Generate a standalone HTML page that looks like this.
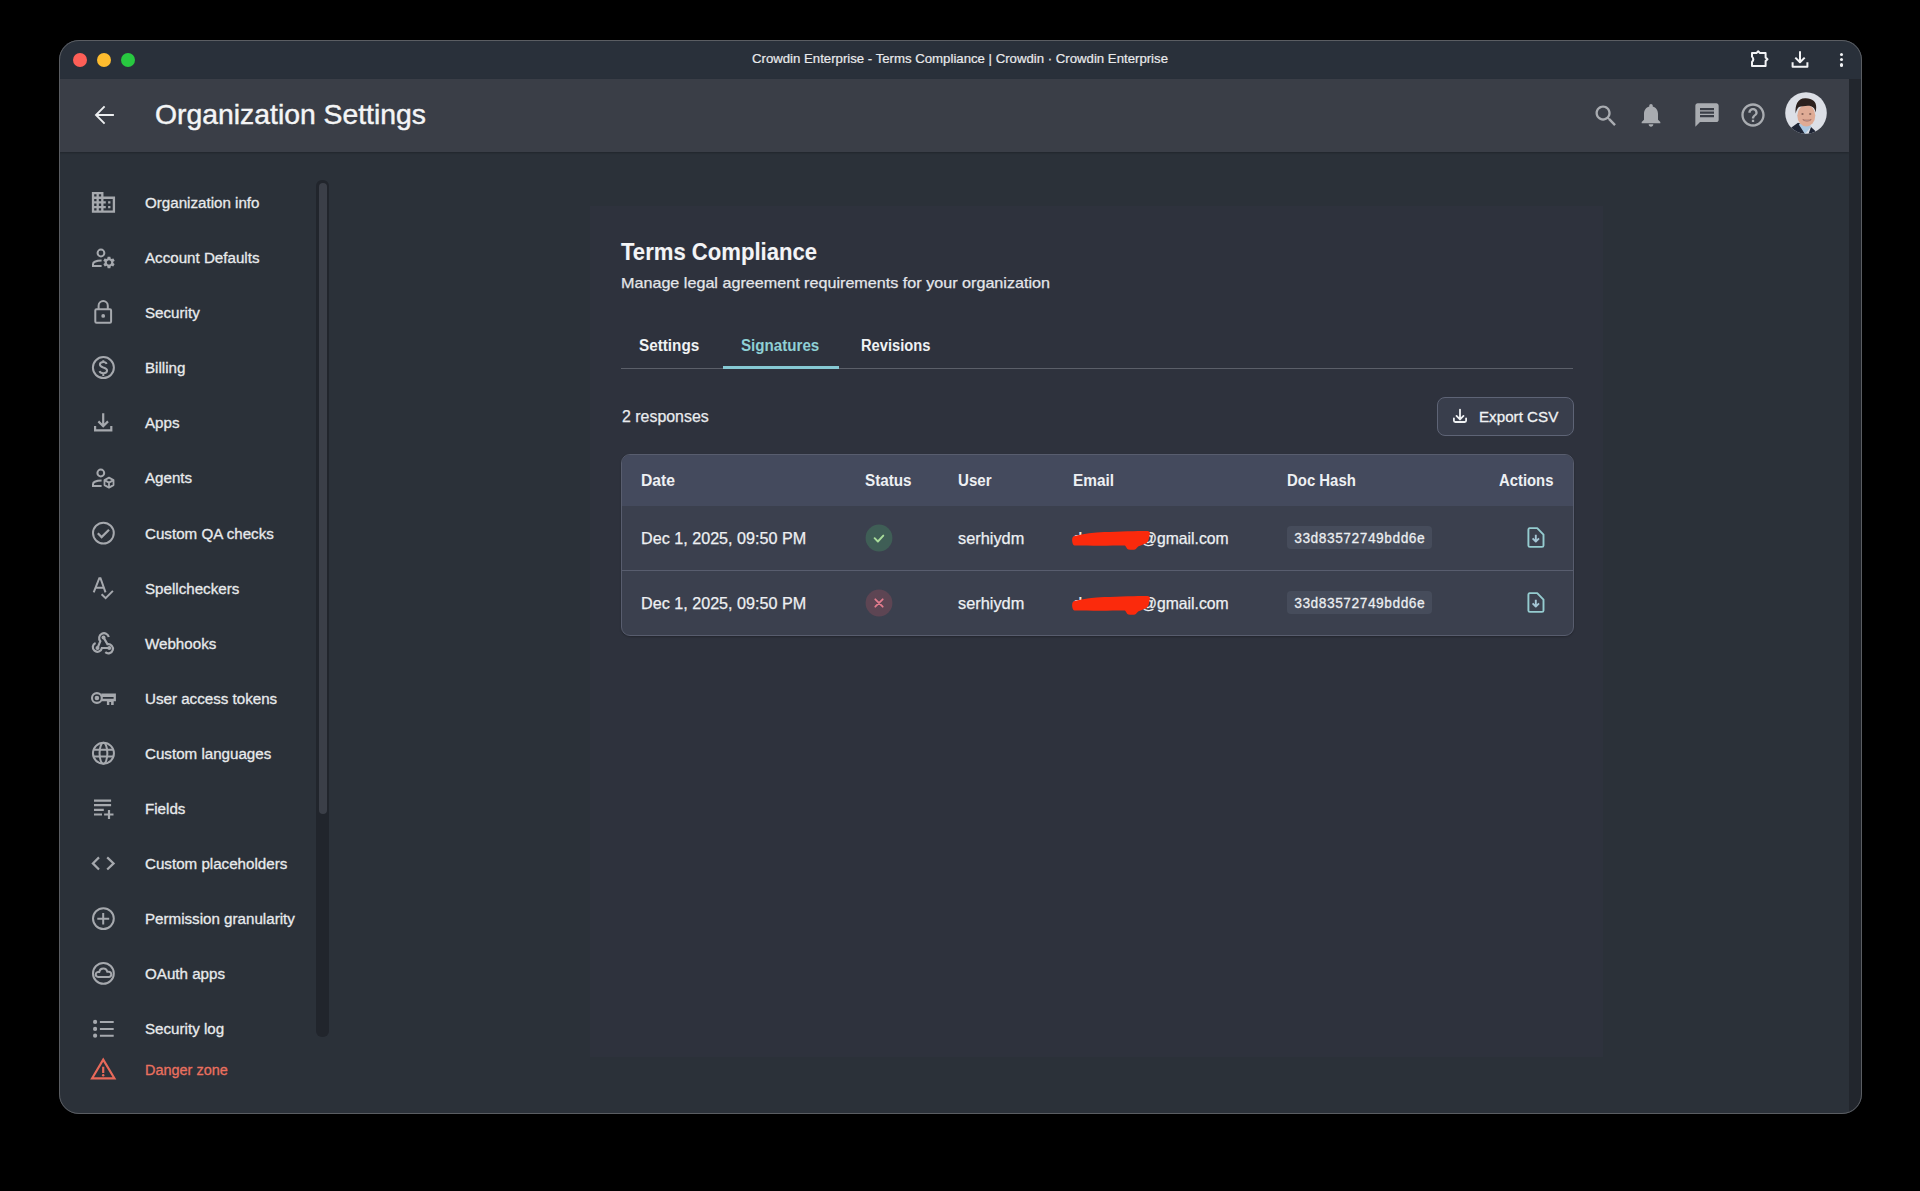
<!DOCTYPE html>
<html><head><meta charset="utf-8">
<style>
*{box-sizing:border-box;margin:0;padding:0}
html,body{width:1920px;height:1191px;background:#000;overflow:hidden;font-family:"Liberation Sans",sans-serif}
#win{position:absolute;left:59px;top:40px;width:1803px;height:1074px;border-radius:20px;overflow:hidden;background:#2b3139}
#in{position:absolute;left:-59px;top:-40px;width:1920px;height:1191px}
#wborder{position:absolute;left:59px;top:40px;width:1803px;height:1074px;border-radius:20px;border:1px solid #5a5d62}
.a{position:absolute}
.t{position:absolute;white-space:nowrap}
.tl{position:absolute;top:52.5px;width:14px;height:14px;border-radius:50%}
.ic{position:absolute;left:86px;width:36px;height:36px;fill:none;stroke:#a6a9ae;stroke-width:2}
.icf{fill:#a6a9ae;stroke:none}
.chip{position:absolute;left:1286.5px;width:145.5px;height:23px;border-radius:4px;background:#464c5b}
</style></head><body>
<div id="win"><div id="in">
<div class="a" style="left:59px;top:40px;width:1803px;height:39px;background:#29303a"></div>
<div class="tl" style="left:72.5px;background:#fe5f57"></div>
<div class="tl" style="left:96.5px;background:#febc2e"></div>
<div class="tl" style="left:120.5px;background:#28c840"></div>
<svg class="a" style="left:1745px;top:45px" width="30" height="30" viewBox="1745 45 30 30"><path d="M1752 53.1 H1756.4 L1758.2 51.2 L1760 53.1 H1765.6 V57.5 L1767.5 59.3 L1765.6 61.1 V66.1 H1752 V62 Q1754.6 59.3 1752 56.6 Z" fill="none" stroke="#f2f3f5" stroke-width="2" stroke-linejoin="round"/></svg>
<svg class="a" style="left:1788px;top:47px" width="24" height="24" viewBox="0 0 24 24"><path d="M12 4.2 V15 M7.3 10.6 L12 15.3 L16.7 10.6 M4.6 15.2 V19.8 H19.4 V15.2" fill="none" stroke="#f2f3f5" stroke-width="2" stroke-linejoin="round"/></svg>
<div class="a" style="left:1839.7px;top:52.7px;width:3.8px;height:3.8px;border-radius:50%;background:#f2f3f5"></div>
<div class="a" style="left:1839.7px;top:57.7px;width:3.8px;height:3.8px;border-radius:50%;background:#f2f3f5"></div>
<div class="a" style="left:1839.7px;top:63px;width:3.8px;height:3.8px;border-radius:50%;background:#f2f3f5"></div>

<div class="a" style="left:59px;top:79px;width:1790px;height:73px;background:#3a3e47;box-shadow:0 1px 2px rgba(0,0,0,.25)"></div>
<svg class="a" style="left:86px;top:97px" width="36" height="36" viewBox="0 0 36 36"><path d="M27.9 18 H10 M18.6 9.4 L10 18 L18.6 26.6" fill="none" stroke="#eceef0" stroke-width="1.9"/></svg>
<svg class="a" style="left:1591.5px;top:101.5px" width="28" height="28" viewBox="0 0 24 24"><path fill="#a9acb1" d="M15.5 14h-.79l-.28-.27C15.41 12.59 16 11.11 16 9.5 16 5.91 13.09 3 9.5 3S3 5.91 3 9.5 5.91 16 9.5 16c1.61 0 3.09-.59 4.23-1.57l.27.28v.79l5 4.99L20.49 19l-4.99-5zm-6 0C7.01 14 5 11.99 5 9.5S7.01 5 9.5 5 14 7.01 14 9.5 11.99 14 9.5 14z"/></svg>
<svg class="a" style="left:1637.3px;top:101.1px" width="28" height="28" viewBox="0 0 24 24"><path fill="#a9acb1" d="M12 22c1.1 0 2-.9 2-2h-4c0 1.1.89 2 2 2zm6-6v-5c0-3.07-1.64-5.64-4.5-6.32V4c0-.83-.67-1.5-1.5-1.5s-1.5.67-1.5 1.5v.68C7.63 5.36 6 7.92 6 11v5l-2 2v1h16v-1l-2-2z"/></svg>
<svg class="a" style="left:1692.5px;top:101.2px" width="28" height="28" viewBox="0 0 24 24"><path fill="#a9acb1" d="M20 2H4c-1.1 0-1.99.9-1.99 2L2 22l4-4h14c1.1 0 2-.9 2-2V4c0-1.1-.9-2-2-2zm-2 12H6v-2h12v2zm0-3H6V9h12v2zm0-3H6V6h12v2z"/></svg>
<svg class="a" style="left:1738.6px;top:101.2px" width="28" height="28" viewBox="0 0 24 24"><path fill="#a9acb1" d="M11 18h2v-2h-2v2zm1-16C6.48 2 2 6.48 2 12s4.48 10 10 10 10-4.48 10-10S17.52 2 12 2zm0 18c-4.41 0-8-3.59-8-8s3.59-8 8-8 8 3.59 8 8-3.59 8-8 8zm0-14c-2.21 0-4 1.79-4 4h2c0-1.1.9-2 2-2s2 .9 2 2c0 2-3 1.75-3 5h2c0-2.25 3-2.5 3-5 0-2.21-1.79-4-4-4z"/></svg>
<svg class="a" style="left:1784.5px;top:92.2px" width="42" height="42" viewBox="0 0 42 42">
<defs><clipPath id="av"><circle cx="21" cy="21" r="20.8"/></clipPath></defs>
<g clip-path="url(#av)">
<rect width="42" height="42" fill="#dcdfe6"/>
<path d="M4 42 L6.4 35.5 L13 30.8 L15 31.5 L20 42 Z" fill="#1f2535"/>
<path d="M26 35 L29.8 38.5 L31 42 L23.5 42 Z" fill="#1f2535"/>
<path d="M13.8 32.5 L20 42 L26.2 34.8 L24 31 L16 31 Z" fill="#a9c6e0"/>
<ellipse cx="21.3" cy="23.6" rx="9" ry="10.8" fill="#dfab95"/>
<path d="M10.6 21.5 C10 13 12.5 6.5 20 6.3 C27 6 31.5 9.5 31.2 15.5 L30.8 20.5 C30 17.5 29 15 26 14.2 C22 13.2 17 14.5 14 15 C12.5 16 11.5 18.5 10.6 21.5 Z" fill="#2c211e"/>
<path d="M17.8 27.6 C20 29.6 24 29.6 26.2 27.6 C24 28.4 20 28.4 17.8 27.6 Z" fill="#f4efec" stroke="#8a4d44" stroke-width="0.6"/>
<ellipse cx="17.5" cy="22" rx="1.2" ry="0.7" fill="#6b4a42"/><ellipse cx="25.2" cy="22" rx="1.2" ry="0.7" fill="#6b4a42"/>
</g></svg>
<div class="a" style="left:1849px;top:79px;width:13px;height:1035px;background:#22262d"></div>

<svg class="ic" style="top:185.0px" viewBox="0 0 36 36"><path class="icf" transform="translate(3.55 3.5) scale(1.16)" d="M12 7V3H2v18h20V7H12zM6 19H4v-2h2v2zm0-4H4v-2h2v2zm0-4H4V9h2v2zm0-4H4V5h2v2zm4 12H8v-2h2v2zm0-4H8v-2h2v2zm0-4H8V9h2v2zm0-4H8V5h2v2zm10 12h-8v-2h2v-2h-2v-2h2v-2h-2V9h8v10zm-2-8h-2v2h2v-2zm0 4h-2v2h2v-2z"/></svg>
<svg class="ic" style="top:240.0px" viewBox="0 0 36 36"><circle cx="14.96" cy="13" r="3.4"/><path d="M15.6 20.6 C10.5 20.6 7 22.2 7 24.2 V26 H15.6"/><path class="icf" fill-rule="evenodd" transform="translate(23 22.4) scale(0.6) translate(-12 -12)" d="M19.14 12.94c.04-.3.06-.61.06-.94 0-.32-.02-.64-.07-.94l2.03-1.58c.18-.14.23-.41.12-.61l-1.92-3.32c-.12-.22-.37-.29-.59-.22l-2.39.96c-.5-.38-1.03-.7-1.620-.94l-.36-2.54c-.04-.24-.24-.41-.48-.41h-3.84c-.24 0-.43.17-.47.41l-.36 2.54c-.59.24-1.13.57-1.62.94l-2.39-.96c-.22-.08-.47 0-.59.22L2.74 8.87c-.12.21-.08.47.12.61l2.03 1.58c-.05.3-.09.63-.09.94s.02.64.07.94l-2.03 1.58c-.18.14-.23.41-.12.61l1.92 3.32c.12.22.37.29.59.22l2.39-.96c.5.38 1.03.7 1.62.94l.36 2.54c.05.24.24.41.48.41h3.84c.24 0 .44-.17.47-.41l.36-2.54c.59-.24 1.13-.56 1.62-.94l2.39.96c.22.08.47 0 .59-.22l1.92-3.32c.12-.22.07-.47-.12-.61l-2.01-1.58zM12 15.6c-1.98 0-3.6-1.62-3.6-3.6s1.62-3.6 3.6-3.6 3.6 1.62 3.6 3.6-1.62 3.6-3.6 3.6z"/></svg>
<svg class="ic" style="top:295.0px" viewBox="0 0 36 36"><path d="M12.6 14.3 V10.65 A4.6 4.6 0 0 1 21.8 10.65 V14.3"/><rect x="9.3" y="14.2" width="15.8" height="13.6" rx="1.2"/><circle class="icf" cx="17.2" cy="20.9" r="1.9"/></svg>
<svg class="ic" style="top:350.0px" viewBox="0 0 36 36"><circle cx="17.4" cy="17.6" r="10.5"/><path d="M20.6 14 C20.2 12.8 19 12.1 17.3 12.1 C15.1 12.1 13.9 13.2 13.9 14.6 C13.9 16.3 15.4 16.9 17.3 17.5 C19.5 18.1 21.1 18.8 21.1 20.6 C21.1 22.2 19.6 23.2 17.3 23.2 C15.2 23.2 14 22.4 13.5 21.1 M17.3 10.2 V12.1 M17.3 23.2 V25.9"/></svg>
<svg class="ic" style="top:405.0px" viewBox="0 0 36 36"><path d="M17.2 8.2 V21.2 M12.4 16.4 L17.2 21.2 L22 16.4 M9.1 21 V25.3 H25.3 V21" stroke-width="2.2"/></svg>
<svg class="ic" style="top:460.0px" viewBox="0 0 36 36"><circle cx="14.8" cy="13" r="3.4"/><path d="M15.6 20.6 C10.5 20.6 7 22.2 7 24.2 V26 H15.6"/><path d="M23 17.6 L27.5 20.1 V25.1 L23 27.6 L18.5 25.1 V20.1 Z M18.5 20.1 L23 22.6 L27.5 20.1 M23 22.6 V27.6" stroke-width="1.8" stroke-linejoin="round"/></svg>
<svg class="ic" style="top:515.0px" viewBox="0 0 36 36"><circle cx="17.4" cy="18.1" r="10.4"/><path d="M11.8 18.3 L15.6 22.1 L23 14.7" stroke-width="2.2"/></svg>
<svg class="ic" style="top:570.0px" viewBox="0 0 36 36"><path d="M7.7 22.3 L13.3 8.2 H14.5 L19.5 22.3 M9.9 17.8 H17.6 M15.6 24.2 L19.6 28.1 L26.9 20.9" stroke-width="2"/></svg>
<svg class="ic" style="top:625.0px" viewBox="0 0 36 36"><path stroke-width="2.2" d="M22.8 12 A4.9 4.9 0 1 0 14.3 16.3 L11.5 23 M17.5 12.4 L21.5 19.2 A4.6 4.6 0 1 1 19.3 27.2 M23.3 23 H15.9 A4.6 4.6 0 1 1 9.6 17.9"/><circle class="icf" cx="17.5" cy="12.4" r="2"/><circle class="icf" cx="11.5" cy="23" r="2"/><circle class="icf" cx="23.3" cy="23" r="2"/></svg>
<svg class="ic" style="top:680.0px" viewBox="0 0 36 36"><circle cx="10.9" cy="18" r="4.9" stroke-width="2.1"/><circle class="icf" cx="10.9" cy="18" r="2.3"/><path class="icf" fill-rule="evenodd" d="M15.3 13.5 H29.9 V21.2 H27.7 V25.1 H25.1 V22.1 H23.3 V25.1 H20.9 V21.2 H15.3 Z M16.2 16.9 H27.6 V18.8 H16.2 Z"/></svg>
<svg class="ic" style="top:735.0px" viewBox="0 0 36 36"><circle cx="17.45" cy="18.3" r="10.5"/><ellipse cx="17.45" cy="18.3" rx="3.9" ry="10.5"/><path d="M7.6 14.8 H27.3 M7.6 21.6 H27.3"/></svg>
<svg class="ic" style="top:790.0px" viewBox="0 0 36 36"><path d="M8 10.6 H25.1 M8 15.1 H25.1 M8 19.8 H17.8 M8 24.5 H16 M18.1 24.5 H27.5 M23 20.1 V29" stroke-width="2.2"/></svg>
<svg class="ic" style="top:845.0px" viewBox="0 0 36 36"><path d="M13 12.4 L6.9 18.4 L13 24.5 M21.2 12.4 L27.6 18.4 L21.2 24.5" stroke-width="2.2"/></svg>
<svg class="ic" style="top:900.0px" viewBox="0 0 36 36"><circle cx="17.4" cy="18.6" r="10.4"/><path d="M11.3 18.7 H23.2 M17.2 13 V24.5"/></svg>
<svg class="ic" style="top:955.0px" viewBox="0 0 36 36"><circle cx="17.4" cy="18.4" r="10.4"/><path d="M12.2 21.9 H22.6 A2.6 2.6 0 0 0 22.8 16.7 H21.3 A4.1 4.1 0 0 0 13.3 16.9 H12.3 A2.5 2.5 0 0 0 12.2 21.9 Z"/></svg>
<svg class="ic" style="top:1010.0px" viewBox="0 0 36 36"><circle class="icf" cx="9.1" cy="11.9" r="2.1"/><circle class="icf" cx="9.1" cy="18.9" r="2.1"/><circle class="icf" cx="9.1" cy="25.7" r="2.1"/><path d="M13.9 11.9 H27.7 M13.9 18.9 H27.7 M13.9 25.7 H27.7"/></svg>
<svg class="ic" style="top:1051px;stroke:#e8695a" viewBox="0 0 36 36"><path d="M17.2 8.6 L28.4 27.3 H6.1 Z" stroke-width="2.2" stroke-linejoin="miter"/><path d="M17.2 15.7 V22" stroke-width="2.2"/><circle cx="17.2" cy="24.2" r="1.2" fill="#e8695a" stroke="none"/></svg>
<div class="a" style="left:316px;top:179.5px;width:13px;height:857px;background:#21252c;border-radius:6px"></div>
<div class="a" style="left:318.5px;top:182.5px;width:8.5px;height:631px;background:#3b3f48;border-radius:5px"></div>

<div class="a" style="left:590px;top:206px;width:1013px;height:851px;background:#2e323d"></div>
<div class="a" style="left:621px;top:368px;width:952px;height:1px;background:#5b5f69"></div>
<div class="a" style="left:722.5px;top:365.5px;width:116px;height:3px;background:#86c9d4"></div>
<div class="a" style="left:1436.5px;top:397px;width:137px;height:38.5px;border:1px solid #5e6476;border-radius:8px;background:#393e4c"></div>
<svg class="a" style="left:1448px;top:404px" width="24" height="24" viewBox="0 0 24 24"><path d="M12 5.6 V15.4 M8.5 11.9 L12 15.4 L15.5 11.9 M5.9 14.3 V16.6 A1.4 1.4 0 0 0 7.3 18 H16.7 A1.4 1.4 0 0 0 18.1 16.6 V14.3" fill="none" stroke="#f0f2f4" stroke-width="1.8" stroke-linejoin="round" stroke-linecap="round"/></svg>
<div class="a" style="left:621px;top:453.5px;width:953px;height:182px;border:1px solid #585d6e;border-radius:9px;overflow:hidden;background:#3b404e;box-shadow:0 1px 2px rgba(0,0,0,.25)">
<div class="a" style="left:0;top:0;width:100%;height:51px;background:#444a5d"></div>
<div class="a" style="left:0;top:115.5px;width:100%;height:1px;background:#585d6e"></div>
</div>
<svg class="a" style="left:864.5px;top:523.5px" width="28" height="28" viewBox="0 0 28 28"><circle cx="14" cy="14" r="13.4" fill="#3f5e56"/><path d="M9.6 14.2 L12.9 17.5 L18.3 11.6" fill="none" stroke="#a8dc9b" stroke-width="1.9" stroke-linecap="round" stroke-linejoin="round"/></svg>
<div class="chip" style="top:526.3px"></div>
<svg class="a" style="left:1516px;top:518.0px" width="40" height="40" viewBox="0 0 40 40"><path d="M13.5 10.1 H21.2 L27.5 16.6 V27.4 A1.5 1.5 0 0 1 26 28.9 H13.9 A1.5 1.5 0 0 1 12.4 27.4 V11.6 A1.5 1.5 0 0 1 13.9 10.1 Z" fill="none" stroke="#95ccd0" stroke-width="1.9" stroke-linejoin="round"/><path d="M19.8 16.8 V23.3 M16.6 20.4 L19.8 23.6 L23 20.4" fill="none" stroke="#a6c6d6" stroke-width="1.9" stroke-linejoin="round"/></svg>
<svg class="a" style="left:864.5px;top:588.5px" width="28" height="28" viewBox="0 0 28 28"><circle cx="14" cy="14" r="13.4" fill="#5d4553"/><path d="M10.3 10.3 L17.7 17.7 M17.7 10.3 L10.3 17.7" fill="none" stroke="#e27c8d" stroke-width="1.8" stroke-linecap="round"/></svg>
<div class="chip" style="top:591.3px"></div>
<svg class="a" style="left:1516px;top:583.0px" width="40" height="40" viewBox="0 0 40 40"><path d="M13.5 10.1 H21.2 L27.5 16.6 V27.4 A1.5 1.5 0 0 1 26 28.9 H13.9 A1.5 1.5 0 0 1 12.4 27.4 V11.6 A1.5 1.5 0 0 1 13.9 10.1 Z" fill="none" stroke="#95ccd0" stroke-width="1.9" stroke-linejoin="round"/><path d="M19.8 16.8 V23.3 M16.6 20.4 L19.8 23.6 L23 20.4" fill="none" stroke="#a6c6d6" stroke-width="1.9" stroke-linejoin="round"/></svg>
<div class="t" style="left:751.7px;top:51.08px;font-family:'Liberation Sans';font-size:13.3px;font-weight:normal;line-height:16.62px;color:#e9eaec;-webkit-text-stroke:0.2px #e9eaec;transform:scaleX(0.9922);transform-origin:0 0;">Crowdin Enterprise - Terms Compliance | Crowdin · Crowdin Enterprise</div>
<div class="t" style="left:155px;top:97.21px;font-family:'Liberation Sans';font-size:28.5px;font-weight:normal;line-height:35.62px;color:#f4f5f6;-webkit-text-stroke:0.45px #f4f5f6;transform:scaleX(0.9945);transform-origin:0 0;">Organization Settings</div>
<div class="t" style="left:144.8px;top:193.14px;font-family:'Liberation Sans';font-size:15.5px;font-weight:normal;line-height:19.38px;color:#e8eaec;-webkit-text-stroke:0.3px #e8eaec;transform:scaleX(0.9771);transform-origin:0 0;">Organization info</div>
<div class="t" style="left:144.8px;top:248.21px;font-family:'Liberation Sans';font-size:15.5px;font-weight:normal;line-height:19.38px;color:#e8eaec;-webkit-text-stroke:0.3px #e8eaec;transform:scaleX(0.9771);transform-origin:0 0;">Account Defaults</div>
<div class="t" style="left:144.8px;top:303.28px;font-family:'Liberation Sans';font-size:15.5px;font-weight:normal;line-height:19.38px;color:#e8eaec;-webkit-text-stroke:0.3px #e8eaec;transform:scaleX(0.9771);transform-origin:0 0;">Security</div>
<div class="t" style="left:144.8px;top:358.35px;font-family:'Liberation Sans';font-size:15.5px;font-weight:normal;line-height:19.38px;color:#e8eaec;-webkit-text-stroke:0.3px #e8eaec;transform:scaleX(0.9771);transform-origin:0 0;">Billing</div>
<div class="t" style="left:144.8px;top:413.42px;font-family:'Liberation Sans';font-size:15.5px;font-weight:normal;line-height:19.38px;color:#e8eaec;-webkit-text-stroke:0.3px #e8eaec;transform:scaleX(0.9771);transform-origin:0 0;">Apps</div>
<div class="t" style="left:144.8px;top:468.49px;font-family:'Liberation Sans';font-size:15.5px;font-weight:normal;line-height:19.38px;color:#e8eaec;-webkit-text-stroke:0.3px #e8eaec;transform:scaleX(0.9771);transform-origin:0 0;">Agents</div>
<div class="t" style="left:144.8px;top:523.56px;font-family:'Liberation Sans';font-size:15.5px;font-weight:normal;line-height:19.38px;color:#e8eaec;-webkit-text-stroke:0.3px #e8eaec;transform:scaleX(0.9771);transform-origin:0 0;">Custom QA checks</div>
<div class="t" style="left:144.8px;top:578.63px;font-family:'Liberation Sans';font-size:15.5px;font-weight:normal;line-height:19.38px;color:#e8eaec;-webkit-text-stroke:0.3px #e8eaec;transform:scaleX(0.9771);transform-origin:0 0;">Spellcheckers</div>
<div class="t" style="left:144.8px;top:633.70px;font-family:'Liberation Sans';font-size:15.5px;font-weight:normal;line-height:19.38px;color:#e8eaec;-webkit-text-stroke:0.3px #e8eaec;transform:scaleX(0.9771);transform-origin:0 0;">Webhooks</div>
<div class="t" style="left:144.8px;top:688.77px;font-family:'Liberation Sans';font-size:15.5px;font-weight:normal;line-height:19.38px;color:#e8eaec;-webkit-text-stroke:0.3px #e8eaec;transform:scaleX(0.9771);transform-origin:0 0;">User access tokens</div>
<div class="t" style="left:144.8px;top:743.84px;font-family:'Liberation Sans';font-size:15.5px;font-weight:normal;line-height:19.38px;color:#e8eaec;-webkit-text-stroke:0.3px #e8eaec;transform:scaleX(0.9771);transform-origin:0 0;">Custom languages</div>
<div class="t" style="left:144.8px;top:798.91px;font-family:'Liberation Sans';font-size:15.5px;font-weight:normal;line-height:19.38px;color:#e8eaec;-webkit-text-stroke:0.3px #e8eaec;transform:scaleX(0.9771);transform-origin:0 0;">Fields</div>
<div class="t" style="left:144.8px;top:853.98px;font-family:'Liberation Sans';font-size:15.5px;font-weight:normal;line-height:19.38px;color:#e8eaec;-webkit-text-stroke:0.3px #e8eaec;transform:scaleX(0.9771);transform-origin:0 0;">Custom placeholders</div>
<div class="t" style="left:144.8px;top:909.05px;font-family:'Liberation Sans';font-size:15.5px;font-weight:normal;line-height:19.38px;color:#e8eaec;-webkit-text-stroke:0.3px #e8eaec;transform:scaleX(0.9771);transform-origin:0 0;">Permission granularity</div>
<div class="t" style="left:144.8px;top:964.12px;font-family:'Liberation Sans';font-size:15.5px;font-weight:normal;line-height:19.38px;color:#e8eaec;-webkit-text-stroke:0.3px #e8eaec;transform:scaleX(0.9771);transform-origin:0 0;">OAuth apps</div>
<div class="t" style="left:144.8px;top:1019.19px;font-family:'Liberation Sans';font-size:15.5px;font-weight:normal;line-height:19.38px;color:#e8eaec;-webkit-text-stroke:0.3px #e8eaec;transform:scaleX(0.9771);transform-origin:0 0;">Security log</div>
<div class="t" style="left:145.2px;top:1059.73px;font-family:'Liberation Sans';font-size:15.2px;font-weight:normal;line-height:19.0px;color:#ea705f;-webkit-text-stroke:0.3px #ea705f;transform:scaleX(0.9521);transform-origin:0 0;">Danger zone</div>
<div class="t" style="left:621px;top:236.68px;font-family:'Liberation Sans';font-size:24px;font-weight:bold;line-height:30.0px;color:#f3f4f6;-webkit-text-stroke:0.1px #f3f4f6;transform:scaleX(0.9204);transform-origin:0 0;">Terms Compliance</div>
<div class="t" style="left:621px;top:274.43px;font-family:'Liberation Sans';font-size:15px;font-weight:normal;line-height:18.75px;color:#e4e6ea;-webkit-text-stroke:0.25px #e4e6ea;transform:scaleX(1.0764);transform-origin:0 0;">Manage legal agreement requirements for your organization</div>
<div class="t" style="left:639.2px;top:335.71px;font-family:'Liberation Sans';font-size:16px;font-weight:bold;line-height:20.0px;color:#f0f2f4;transform:scaleX(0.9537);transform-origin:0 0;">Settings</div>
<div class="t" style="left:741px;top:335.71px;font-family:'Liberation Sans';font-size:16px;font-weight:bold;line-height:20.0px;color:#8fd0d5;transform:scaleX(0.9469);transform-origin:0 0;">Signatures</div>
<div class="t" style="left:861px;top:335.71px;font-family:'Liberation Sans';font-size:16px;font-weight:bold;line-height:20.0px;color:#f0f2f4;transform:scaleX(0.9194);transform-origin:0 0;">Revisions</div>
<div class="t" style="left:621.5px;top:406.94px;font-family:'Liberation Sans';font-size:15.6px;font-weight:normal;line-height:19.5px;color:#e9ebee;-webkit-text-stroke:0.25px #e9ebee;transform:scaleX(1.0206);transform-origin:0 0;">2 responses</div>
<div class="t" style="left:1479.2px;top:407.14px;font-family:'Liberation Sans';font-size:15.3px;font-weight:normal;line-height:19.12px;color:#f0f2f4;-webkit-text-stroke:0.3px #f0f2f4;transform:scaleX(0.9922);transform-origin:0 0;">Export CSV</div>
<div class="t" style="left:640.5px;top:470.96px;font-family:'Liberation Sans';font-size:16px;font-weight:bold;line-height:20.0px;color:#eef0f3;transform:scaleX(0.9802);transform-origin:0 0;">Date</div>
<div class="t" style="left:865px;top:470.96px;font-family:'Liberation Sans';font-size:16px;font-weight:bold;line-height:20.0px;color:#eef0f3;transform:scaleX(0.9528);transform-origin:0 0;">Status</div>
<div class="t" style="left:958px;top:470.96px;font-family:'Liberation Sans';font-size:16px;font-weight:bold;line-height:20.0px;color:#eef0f3;transform:scaleX(0.9416);transform-origin:0 0;">User</div>
<div class="t" style="left:1072.8px;top:470.96px;font-family:'Liberation Sans';font-size:16px;font-weight:bold;line-height:20.0px;color:#eef0f3;transform:scaleX(0.9605);transform-origin:0 0;">Email</div>
<div class="t" style="left:1287px;top:470.96px;font-family:'Liberation Sans';font-size:16px;font-weight:bold;line-height:20.0px;color:#eef0f3;transform:scaleX(0.9323);transform-origin:0 0;">Doc Hash</div>
<div class="t" style="left:1499.4px;top:470.96px;font-family:'Liberation Sans';font-size:16px;font-weight:bold;line-height:20.0px;color:#eef0f3;transform:scaleX(0.9272);transform-origin:0 0;">Actions</div>
<div class="t" style="left:640.5px;top:527.97px;font-family:'Liberation Sans';font-size:16.5px;font-weight:normal;line-height:20.62px;color:#eef0f3;-webkit-text-stroke:0.25px #eef0f3;transform:scaleX(0.9788);transform-origin:0 0;">Dec 1, 2025, 09:50 PM</div>
<div class="t" style="left:958px;top:527.97px;font-family:'Liberation Sans';font-size:16.5px;font-weight:normal;line-height:20.62px;color:#eef0f3;-webkit-text-stroke:0.25px #eef0f3;transform:scaleX(0.9905);transform-origin:0 0;">serhiydm</div>
<div class="t" style="left:1073px;top:527.97px;font-family:'Liberation Sans';font-size:16.5px;font-weight:normal;line-height:20.62px;color:#eef0f3;-webkit-text-stroke:0.25px #eef0f3;">d</div>
<div class="t" style="left:1140.8px;top:527.97px;font-family:'Liberation Sans';font-size:16.5px;font-weight:normal;line-height:20.62px;color:#eef0f3;-webkit-text-stroke:0.25px #eef0f3;transform:scaleX(0.9528);transform-origin:0 0;">@gmail.com</div>
<div class="t" style="left:1293.9px;top:529.62px;font-family:'Liberation Mono';font-size:14.5px;font-weight:normal;line-height:18.12px;color:#eceef1;-webkit-text-stroke:0.3px #eceef1;transform:scaleX(0.9409);transform-origin:0 0;">33d83572749bdd6e</div>
<div class="t" style="left:640.5px;top:592.97px;font-family:'Liberation Sans';font-size:16.5px;font-weight:normal;line-height:20.62px;color:#eef0f3;-webkit-text-stroke:0.25px #eef0f3;transform:scaleX(0.9788);transform-origin:0 0;">Dec 1, 2025, 09:50 PM</div>
<div class="t" style="left:958px;top:592.97px;font-family:'Liberation Sans';font-size:16.5px;font-weight:normal;line-height:20.62px;color:#eef0f3;-webkit-text-stroke:0.25px #eef0f3;transform:scaleX(0.9905);transform-origin:0 0;">serhiydm</div>
<div class="t" style="left:1073px;top:592.97px;font-family:'Liberation Sans';font-size:16.5px;font-weight:normal;line-height:20.62px;color:#eef0f3;-webkit-text-stroke:0.25px #eef0f3;">d</div>
<div class="t" style="left:1140.8px;top:592.97px;font-family:'Liberation Sans';font-size:16.5px;font-weight:normal;line-height:20.62px;color:#eef0f3;-webkit-text-stroke:0.25px #eef0f3;transform:scaleX(0.9528);transform-origin:0 0;">@gmail.com</div>
<div class="t" style="left:1293.9px;top:594.62px;font-family:'Liberation Mono';font-size:14.5px;font-weight:normal;line-height:18.12px;color:#eceef1;-webkit-text-stroke:0.3px #eceef1;transform:scaleX(0.9409);transform-origin:0 0;">33d83572749bdd6e</div>
<svg class="a" style="left:1070px;top:528.5px" width="82" height="22" viewBox="0 0 82 22"><path d="M2.1 11.6 C2 8.8 3 7.2 4.4 7 C14 5 24 3.5 34.2 3.1 C50 2.5 66 2 77.7 2 C80 2.3 80.5 4.5 79.5 6.3 C79 10 78.5 12.5 76.6 13.9 C73 15.5 70.5 16.3 68.5 17.3 C66.5 19 65.5 20.8 64 20.8 C60 21 57 20.5 57 19.6 C56.5 18.5 55.5 17.2 54.8 16.6 C40 16.8 20 16.8 4.4 16.6 C3 16.2 2.2 14 2.1 11.6 Z" fill="#fb2a0c"/></svg>
<svg class="a" style="left:1070px;top:593.5px" width="82" height="22" viewBox="0 0 82 22"><path d="M2.1 11.6 C2 8.8 3 7.2 4.4 7 C14 5 24 3.5 34.2 3.1 C50 2.5 66 2 77.7 2 C80 2.3 80.5 4.5 79.5 6.3 C79 10 78.5 12.5 76.6 13.9 C73 15.5 70.5 16.3 68.5 17.3 C66.5 19 65.5 20.8 64 20.8 C60 21 57 20.5 57 19.6 C56.5 18.5 55.5 17.2 54.8 16.6 C40 16.8 20 16.8 4.4 16.6 C3 16.2 2.2 14 2.1 11.6 Z" fill="#fb2a0c"/></svg>
</div></div>
<div id="wborder"></div>
</body></html>
